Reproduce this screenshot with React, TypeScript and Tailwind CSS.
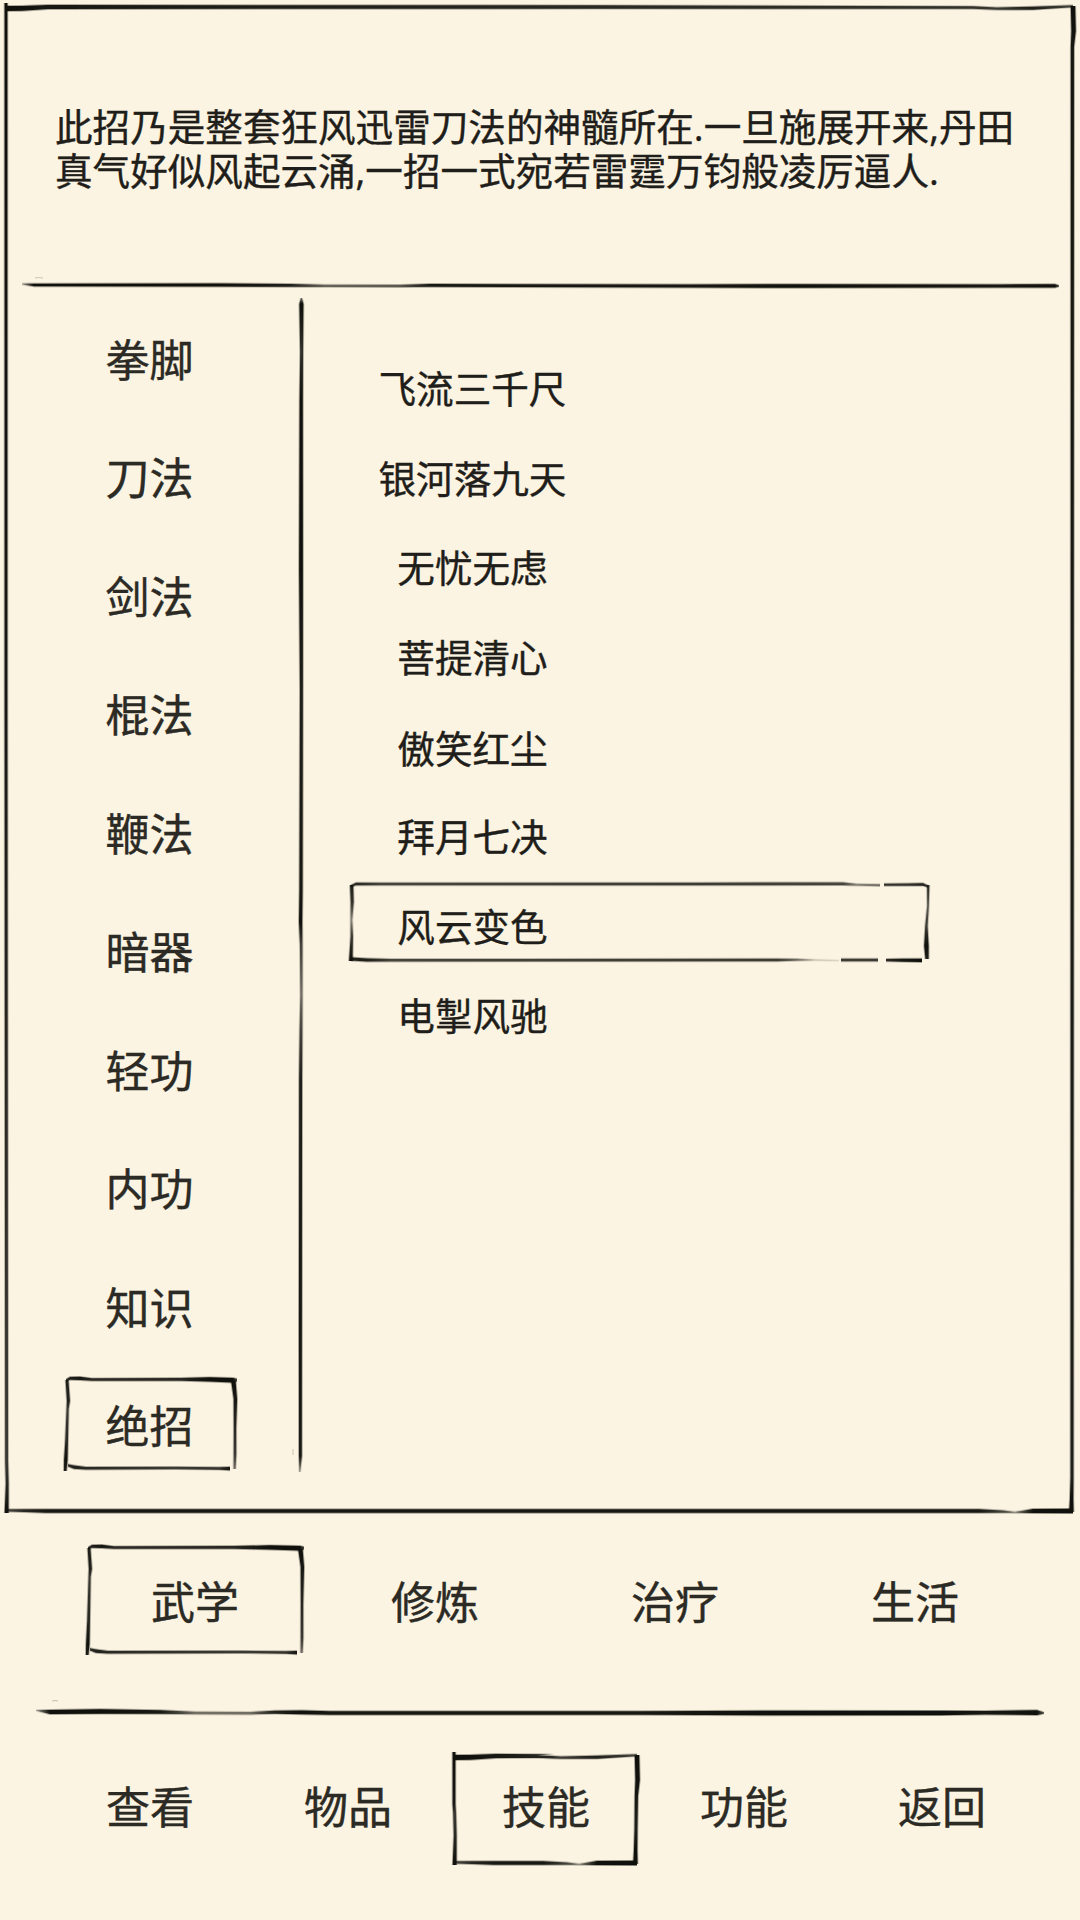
import React, { useId, useState } from 'react';
import clsx from 'clsx';

// [x, y, thickness, opacity] along the centre of the stroke
type BrushPoint = [number, number, number, number];

const DESCRIPTION =
  '此招乃是整套狂风迅雷刀法的神髓所在.一旦施展开来,丹田真气好似风起云涌,一招一式宛若雷霆万钧般凌厉逼人.';

const CATEGORIES = ['拳脚', '刀法', '剑法', '棍法', '鞭法', '暗器', '轻功', '内功', '知识', '绝招'];

const SKILLS = [
  '飞流三千尺',
  '银河落九天',
  '无忧无虑',
  '菩提清心',
  '傲笑红尘',
  '拜月七决',
  '风云变色',
  '电掣风驰',
];

const TABS = ['武学', '修炼', '治疗', '生活'];

const MENU = ['查看', '物品', '技能', '功能', '返回'];

const Brush: React.FC<{ points: BrushPoint[]; vertical?: boolean; color?: string }> = ({
  points,
  vertical = false,
  color = '#10100c',
}) => {
  const id = useId();
  const axis = vertical ? 1 : 0;
  const start = points[0][axis];
  const length = points[points.length - 1][axis] - start;

  const outline = (extra: number) => {
    const side = (dir: number) =>
      points.map(([x, y, t]) => {
        const offset = (dir * (t + extra)) / 2;
        return vertical ? `${x + offset},${y}` : `${x},${y + offset}`;
      });
    return [...side(-1), ...side(1).reverse()].join(' ');
  };

  return (
    <>
      <linearGradient
        id={id}
        gradientUnits="userSpaceOnUse"
        x1={vertical ? 0 : start}
        y1={vertical ? start : 0}
        x2={vertical ? 0 : start + length}
        y2={vertical ? start + length : 0}
      >
        {points.map((p, i) => (
          <stop key={i} offset={(p[axis] - start) / length} stopColor={color} stopOpacity={p[3]} />
        ))}
      </linearGradient>
      <polygon points={outline(2.2)} fill={`url(#${id})`} opacity={0.35} />
      <polygon points={outline(0.3)} fill={`url(#${id})`} />
    </>
  );
};

const svgClass = 'pointer-events-none absolute inset-0 h-full w-full overflow-visible';

// Heavy frame: dark top left corner, worn spot near the bottom right one
const HeavyFrame: React.FC<{ w: number; h: number }> = ({ w, h }) => (
  <svg className={svgClass} viewBox={`0 0 ${w} ${h}`}>
    <Brush
      points={[
        [0, 1.5, 4.5, 1],
        [16, 1.4, 4.5, 1],
        [42, 0, 3.6, 0.95],
        [w * 0.55, 0, 3, 0.85],
        [w - 100, 0.6, 2.2, 0.8],
        [w - 76, 1.6, 2, 0.75],
        [w - 40, 1.2, 2.6, 0.9],
        [w, -0.8, 1.6, 0.7],
      ]}
    />
    <Brush
      vertical
      points={[
        [0, -4, 2.4, 1],
        [0, h * 0.45, 2.4, 0.95],
        [0.6, h - 50, 2.6, 0.75],
        [1.2, h - 28, 2.4, 0.85],
        [0.6, h + 2, 3.4, 1],
      ]}
    />
    <Brush
      vertical
      points={[
        [w, -1, 4, 1],
        [w + 0.6, 24, 4, 1],
        [w - 0.6, 40, 2.8, 0.95],
        [w - 1, h - 34, 2.6, 0.9],
        [w - 1.4, h - 12, 3, 1],
        [w - 1.6, h + 1, 4, 1],
      ]}
    />
    <Brush
      points={[
        [1, h - 0.6, 2, 0.7],
        [18, h - 0.4, 2.4, 0.85],
        [40, h, 3.4, 0.95],
        [w - 94, h, 3.4, 0.95],
        [w - 70, h + 0.6, 2, 0.7],
        [w - 58, h + 1.4, 1.2, 0.35],
        [w - 52, h + 1, 1.8, 0.6],
        [w - 40, h, 3.6, 1],
        [w, h, 4, 1],
      ]}
    />
  </svg>
);

// Light frame: four loose strokes, the bottom one stops short
const LightFrame: React.FC<{ w: number; h: number }> = ({ w, h }) => (
  <svg className={svgClass} viewBox={`0 0 ${w} ${h}`}>
    <Brush
      points={[
        [0, 1.2, 1.6, 0.8],
        [4, -0.6, 2.6, 0.9],
        [14, -0.6, 2.8, 0.95],
        [26, 0.6, 2.2, 0.85],
        [w * 0.68, 0.4, 2.4, 0.85],
        [w * 0.85, 0.4, 3.8, 1],
        [w - 2, 1.2, 4.2, 1],
        [w + 2, 1, 2, 0.7],
      ]}
    />
    <Brush
      vertical
      points={[
        [1, 1, 2.4, 0.9],
        [2.4, 22, 2.6, 0.9],
        [1.6, 30, 1.8, 0.75],
        [0.6, h * 0.7, 2.4, 0.85],
        [-0.2, h - 8, 3, 1],
        [-0.8, h + 3, 2.2, 0.9],
      ]}
    />
    <Brush
      vertical
      points={[
        [w - 1.6, 2, 4, 1],
        [w + 0.4, 20, 3, 0.95],
        [w, h * 0.55, 2, 0.85],
        [w, h - 14, 2.2, 0.75],
        [w - 0.4, h + 1, 1.8, 0.5],
      ]}
    />
    <Brush
      points={[
        [2, h - 2.6, 2, 0.8],
        [8, h - 0.8, 3, 0.9],
        [20, h + 0.2, 2.2, 0.85],
        [w - 60, h, 2, 0.75],
        [w - 16, h + 0.4, 2.2, 0.8],
        [w - 5, h + 0.6, 3, 0.95],
      ]}
    />
  </svg>
);

// Wide frame of the skill list, broken near the right end
const RowFrame: React.FC<{ w: number; h: number }> = ({ w, h }) => (
  <svg className={svgClass} viewBox={`0 0 ${w} ${h}`}>
    <Brush
      points={[
        [0, 2, 1.6, 0.7],
        [5, 0, 2.4, 0.85],
        [30, 0, 2.4, 0.7],
        [w * 0.6, 0, 2.4, 0.75],
        [w - 84, -0.2, 2.4, 0.7],
        [w - 70, 0.8, 1.6, 0.4],
        [w - 47, 1.2, 1.6, 0.5],
      ]}
    />
    <Brush
      points={[
        [w - 43, 0.8, 1.8, 0.8],
        [w - 20, 0.6, 2, 0.8],
        [w - 4, 0.4, 2.2, 0.9],
        [w + 1, 2.4, 1.4, 0.8],
      ]}
    />
    <Brush
      vertical
      points={[
        [0.6, 1, 2.8, 0.9],
        [1.2, 18, 2.6, 0.8],
        [0.4, 36, 1.6, 0.4],
        [0.8, 52, 2, 0.75],
        [0, h - 4, 2.8, 0.95],
        [0, h + 1, 3.4, 1],
      ]}
    />
    <Brush
      vertical
      points={[
        [w + 1.2, 1, 1.8, 0.85],
        [w + 1, 22, 1.4, 0.6],
        [w - 0.6, 42, 2, 0.75],
        [w - 0.6, 62, 4, 1],
        [w, h - 1, 2.8, 0.9],
      ]}
    />
    <Brush
      points={[
        [0, h - 1, 2.6, 0.9],
        [16, h, 2.6, 0.9],
        [40, h + 0.2, 2.2, 0.7],
        [w - 150, h, 2.2, 0.75],
        [w - 130, h - 0.2, 1.6, 0.5],
        [w - 112, h, 1, 0.15],
        [w - 88, h + 0.6, 1, 0.1],
      ]}
    />
    <Brush
      points={[
        [w - 86, h, 2.4, 0.75],
        [w - 49, h, 2.2, 0.75],
      ]}
    />
    <Brush
      points={[
        [w - 41, h + 0.2, 2, 0.85],
        [w - 24, h + 0.2, 2.6, 0.95],
        [w - 5, h + 0.4, 3, 1],
      ]}
    />
  </svg>
);

export default function App() {
  const [category, setCategory] = useState('绝招');
  const [skill, setSkill] = useState('风云变色');
  const [tab, setTab] = useState('武学');
  const [menu, setMenu] = useState('技能');

  return (
    <div
      lang="zh-CN"
      className="flex h-[1920px] w-[1080px] flex-col overflow-hidden bg-[#fcf4e2] font-['Open_Sans','Noto_Sans_CJK_SC',sans-serif] text-[44px] leading-none text-[#2b2a24] [-webkit-text-stroke:0.4px]"
    >
      {/* Main panel */}
      <main className="relative flex h-[1514px] flex-col">
        <div className="pointer-events-none absolute top-[7px] left-[6px] h-[1504px] w-[1067px]">
          <HeavyFrame w={1067} h={1504} />
        </div>

        <header className="h-[280px] pt-[105px] pl-[55px]">
          <p className="w-[980px] text-[37.6px] leading-[44.4px] text-[#1f1e1a]">{DESCRIPTION}</p>
        </header>

        <svg className="h-[10px] w-[1080px] shrink-0 overflow-visible" viewBox="0 0 1080 10">
          <Brush
            points={[
              [22, 4, 0.6, 0.3],
              [34, 5, 2.4, 1],
              [220, 5, 2.8, 1],
              [290, 5.4, 2.4, 0.9],
              [325, 5.8, 2, 0.55],
              [400, 6, 2, 0.6],
              [430, 5.4, 2.4, 0.95],
              [690, 6, 2.8, 0.95],
              [790, 6, 3.2, 1],
              [1000, 6, 2.8, 0.95],
              [1055, 5.8, 3, 1],
              [1059, 6, 1, 0.6],
            ]}
          />
          <path d="M35 -2q4 -1 8 0" fill="none" stroke="#10100c" strokeWidth={0.8} opacity={0.25} />
        </svg>

        <div className="flex min-h-0 flex-1">
          <nav className="w-[299px] pt-[10.5px]">
            {CATEGORIES.map((name) => (
              <button
                key={name}
                onClick={() => setCategory(name)}
                className="relative flex h-[118.5px] w-full items-center justify-center"
              >
                {name}
                {category === name && (
                  <span className="absolute top-[11.5px] left-[65.5px] h-[89px] w-[169px]">
                    <LightFrame w={169} h={89} />
                  </span>
                )}
              </button>
            ))}
          </nav>

          <svg className="h-[1224px] w-1 shrink-0 overflow-visible" viewBox="0 0 4 1224">
            <Brush
              vertical
              points={[
                [2.4, 8, 0.8, 0.5],
                [2.4, 14, 3.6, 1],
                [2.6, 62, 2.6, 0.8],
                [2.2, 110, 2.8, 1],
                [2, 280, 3.4, 1],
                [2.4, 400, 2.6, 0.9],
                [2, 600, 2.8, 0.95],
                [1.6, 632, 2.8, 1],
                [2.2, 655, 2.2, 0.7],
                [2.4, 705, 2, 0.5],
                [2, 740, 2.4, 0.7],
                [1.6, 790, 2.6, 0.9],
                [1.4, 1040, 2.6, 0.95],
                [1.4, 1166, 2.4, 0.95],
                [0.8, 1182, 0.6, 0.4],
              ]}
            />
            <path d="M-6 1159v6" stroke="#10100c" strokeWidth={0.8} opacity={0.25} />
          </svg>

          <ul className="ml-[48px] w-[576px] pt-[54px] text-[37.6px] text-[#1f1e1a]">
            {SKILLS.map((name) => (
              <li key={name}>
                <button
                  onClick={() => setSkill(name)}
                  className={clsx(
                    'relative flex h-[89.6px] w-full items-center',
                    name === '傲笑红尘' && 'pt-[4px]',
                  )}
                >
                  <span className="w-[243px] text-center">{name}</span>
                  {skill === name && (
                    <span className="absolute top-[2.5px] left-0 h-[76px] w-[576px]">
                      <RowFrame w={576} h={76} />
                    </span>
                  )}
                </button>
              </li>
            ))}
          </ul>
        </div>
      </main>

      {/* Skill tabs */}
      <section className="flex h-[176px] shrink-0 pl-[75px]">
        {TABS.map((name) => (
          <button
            key={name}
            onClick={() => setTab(name)}
            className="relative flex w-[240px] items-center justify-center pb-px"
          >
            {name}
            {tab === name && (
              <span className="absolute top-[33px] left-[13px] h-[105px] w-[214px]">
                <LightFrame w={214} h={105} />
              </span>
            )}
          </button>
        ))}
      </section>

      <svg className="h-[44px] w-[1080px] shrink-0 overflow-visible" viewBox="0 0 1080 44">
        <Brush
          points={[
            [36, 20.4, 0.6, 0.3],
            [50, 22, 3.6, 1],
            [100, 21.4, 4.2, 1],
            [160, 22, 3.2, 0.95],
            [195, 23, 2.4, 0.5],
            [250, 23.2, 2.2, 0.5],
            [275, 22.2, 2.6, 0.9],
            [302, 22.4, 3.4, 1],
            [330, 23, 3.2, 0.95],
            [640, 23, 3.4, 0.95],
            [770, 23, 4.2, 1],
            [940, 23, 4, 1],
            [985, 22.8, 3.2, 0.95],
            [1037, 22.6, 4.6, 1],
            [1044, 23, 1, 0.6],
          ]}
        />
        <path d="M52 11q3 -1 6 0" fill="none" stroke="#10100c" strokeWidth={0.8} opacity={0.3} />
      </svg>

      {/* Bottom menu */}
      <footer className="flex h-[147px] shrink-0 pl-[51px]">
        {MENU.map((name) => (
          <button
            key={name}
            onClick={() => setMenu(name)}
            className="relative flex w-[198px] items-center justify-center pb-px"
          >
            {name}
            {menu === name && (
              <span className="absolute top-[22px] left-[7px] h-[107px] w-[183px]">
                <HeavyFrame w={183} h={107} />
              </span>
            )}
          </button>
        ))}
      </footer>
    </div>
  );
}
